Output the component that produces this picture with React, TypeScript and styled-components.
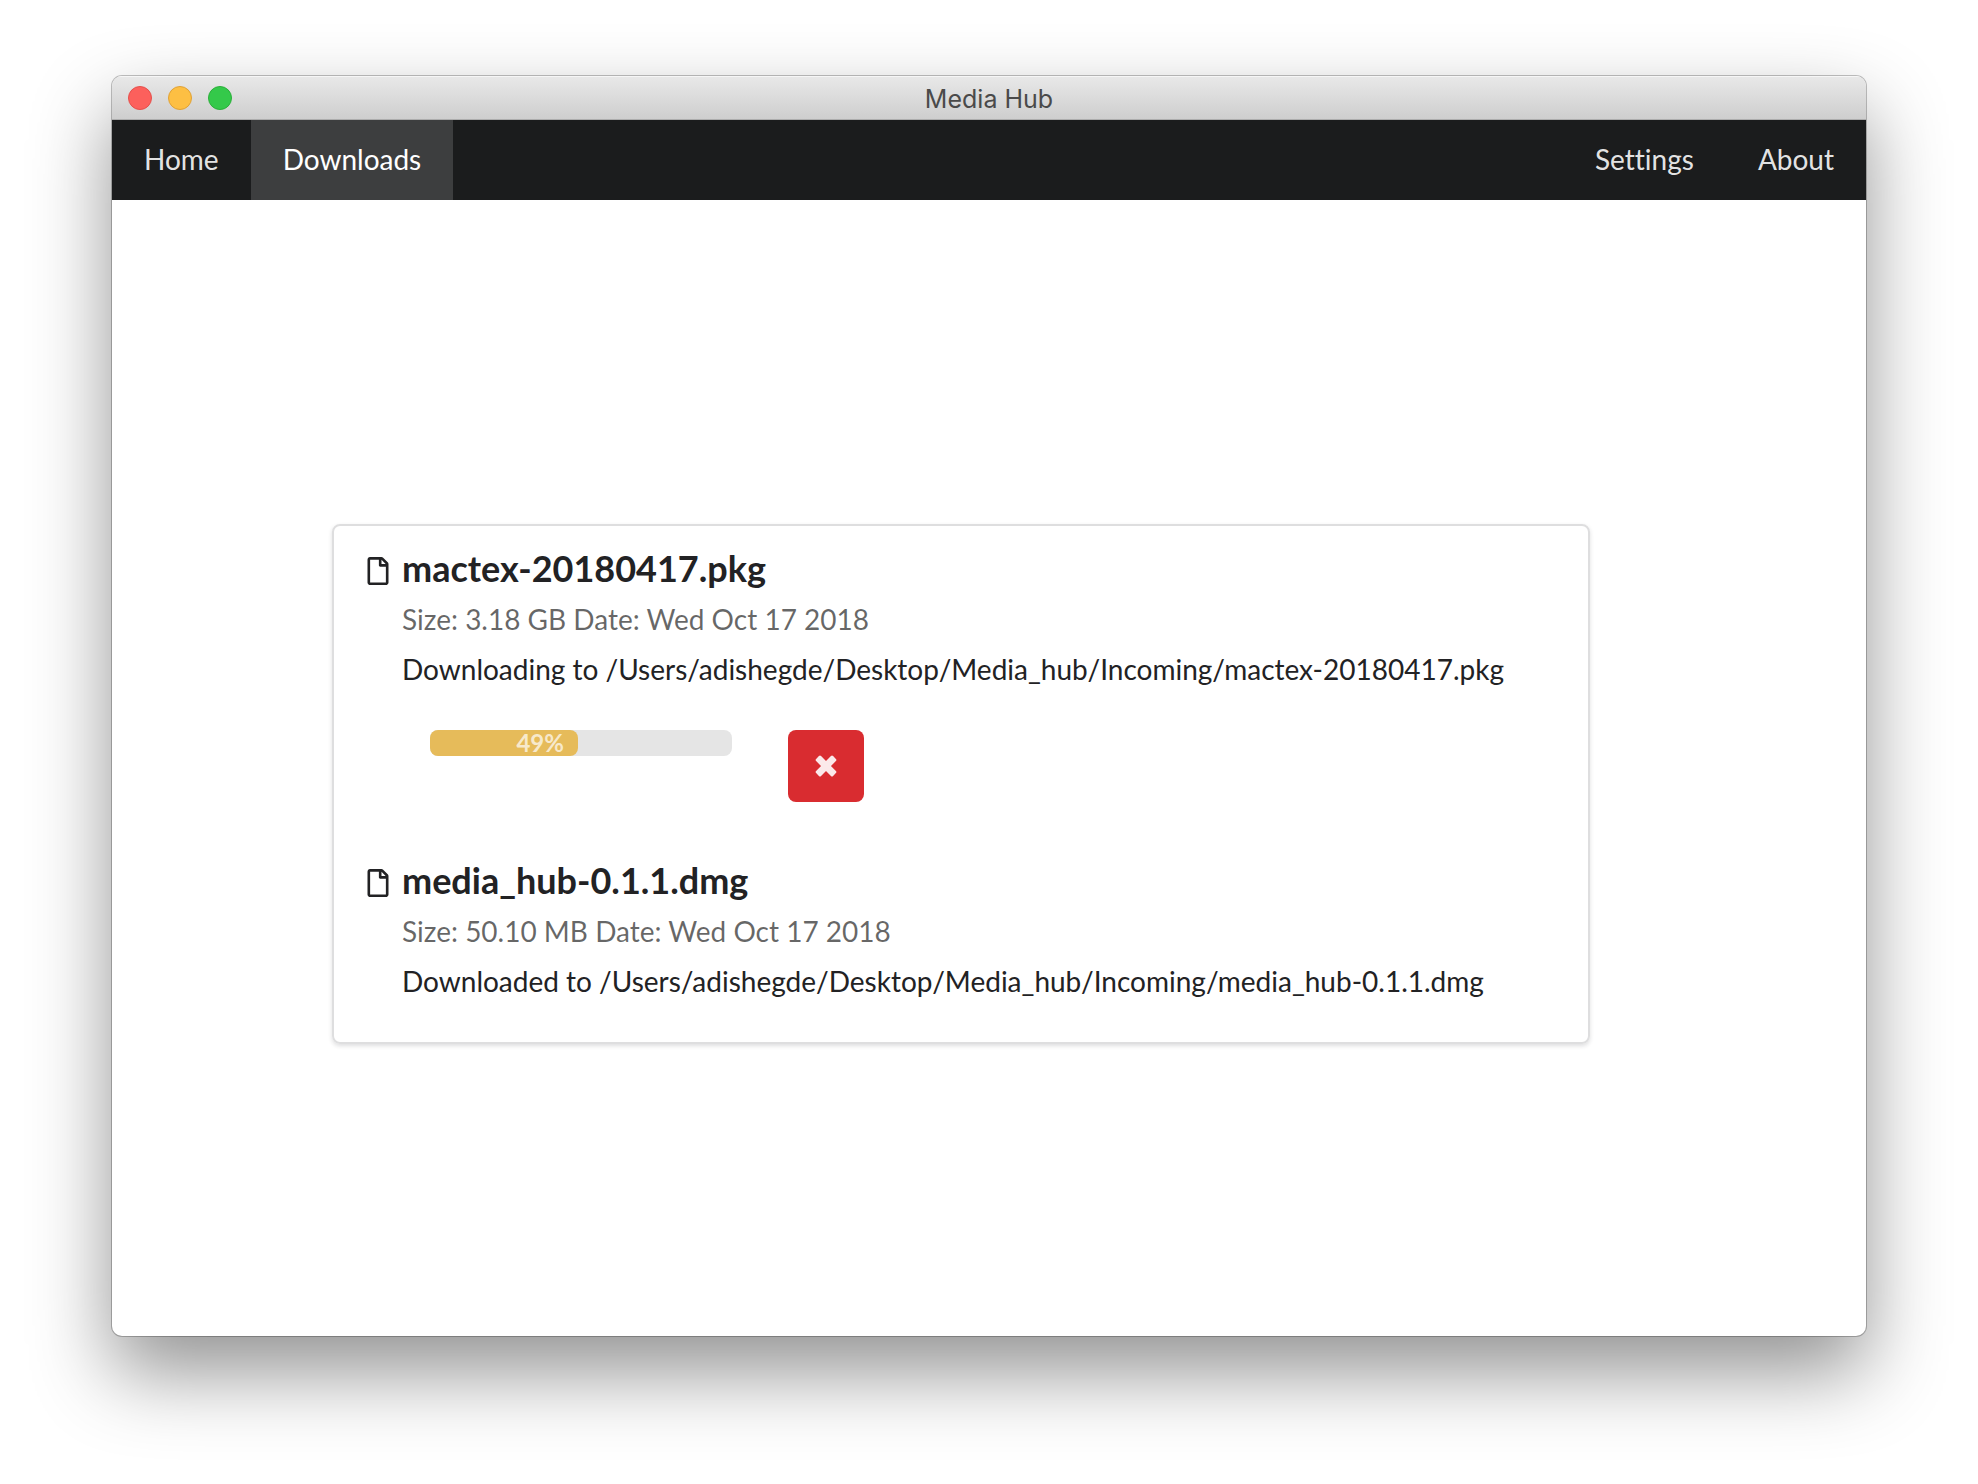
import React from "react";
import styled, { createGlobalStyle } from "styled-components";
import { FaRegFile } from "react-icons/fa";

const GlobalStyle = createGlobalStyle`
  *, *::before, *::after { box-sizing: border-box; }
  html, body { margin: 0; background: #fff; }
  body {
    font-family: Lato, "Open Sans", sans-serif;
    font-size: 28px;
    font-variant-ligatures: none;
    text-rendering: optimizeLegibility;
    color: #222224;
  }
`;

const Desktop = styled.div`
  display: flex;
  min-height: 100vh;
  padding: 76px 112px 148px;
`;

const Window = styled.div`
  flex: 1;
  display: flex;
  flex-direction: column;
  overflow: hidden;
  border-radius: 10px;
  background: #fff;
  box-shadow: 0 0 0 1px rgba(0, 0, 0, 0.24), 0 36px 80px rgba(0, 0, 0, 0.43);
`;

const TitleBar = styled.header`
  display: grid;
  grid-template-columns: 1fr auto 1fr;
  align-items: center;
  height: 44px;
  padding: 0 16px;
  background: linear-gradient(#e8e8e8, #cecece);
  border-top: 1px solid #f6f6f6;
  border-bottom: 1px solid #acacac;
`;

const Lights = styled.div`
  display: flex;
  gap: 16px;
`;

const Light = styled.button<{ $fill: string; $edge: string }>`
  width: 24px;
  height: 24px;
  padding: 0;
  border: 1px solid ${(p) => p.$edge};
  border-radius: 50%;
  background: ${(p) => p.$fill};
`;

const Title = styled.h1`
  margin: 0;
  padding-top: 2px;
  font: 400 25px/32px Inter, Roboto, sans-serif;
  color: #4a4a4a;
`;

const Nav = styled.nav`
  display: flex;
  justify-content: space-between;
  background: #1b1c1d;
`;

const NavGroup = styled.div`
  display: flex;
`;

const NavLink = styled.a<{ $active?: boolean }>`
  padding: 23px 32px 25px;
  line-height: 32px;
  text-decoration: none;
  color: ${(p) => (p.$active ? "#fff" : "rgba(255, 255, 255, 0.9)")};
  background: ${(p) => (p.$active ? "#3d3e3f" : "transparent")};
`;

const Main = styled.main`
  flex: 1;
  display: flex;
  flex-direction: column;
  justify-content: center;
  padding: 32px 276px 0 220px;
`;

const Card = styled.section`
  display: flex;
  flex-direction: column;
  gap: 48px;
  padding: 18px 28px 36px;
  border: 2px solid #dededf;
  border-radius: 8px;
  box-shadow: 0 2px 4px rgba(34, 36, 38, 0.15);
`;

const Item = styled.article`
  display: grid;
  grid-template-columns: 32px 1fr;
  column-gap: 8px;
`;

const FileIcon = styled(FaRegFile)`
  width: 28px;
  height: 28px;
  margin-top: 13px;
  justify-self: center;
`;

const FileName = styled.h2`
  margin: 0 0 2px;
  font-size: 36px;
  line-height: 48px;
  font-weight: 700;
`;

const Meta = styled.p`
  margin: 0;
  line-height: 50px;
  color: rgba(0, 0, 0, 0.6);
`;

const Path = styled.p`
  margin: 0;
  line-height: 50px;
`;

const Controls = styled.div`
  display: flex;
  align-items: flex-start;
  gap: 56px;
  padding: 36px 28px 6px;
`;

const Track = styled.div`
  width: 302px;
  border-radius: 8px;
  background: #e5e5e5;
`;

const Bar = styled.div`
  padding-right: 14px;
  border-radius: 8px;
  background: #e6bb5a;
  color: rgba(255, 255, 255, 0.7);
  font-size: 24px;
  line-height: 26px;
  font-weight: 700;
  text-align: right;
`;

const CancelButton = styled.button`
  display: flex;
  align-items: center;
  justify-content: center;
  width: 76px;
  height: 72px;
  padding: 0;
  border: 0;
  border-radius: 8px;
  background: #d92c30;
`;

type Download = {
  name: string;
  size: string;
  date: string;
  status: string;
  folder: string;
  progress?: number;
};

const downloads: Download[] = [
  {
    name: "mactex-20180417.pkg",
    size: "3.18 GB",
    date: "Wed Oct 17 2018",
    status: "Downloading",
    folder: "/Users/adishegde/Desktop/Media_hub/Incoming/",
    progress: 49,
  },
  {
    name: "media_hub-0.1.1.dmg",
    size: "50.10 MB",
    date: "Wed Oct 17 2018",
    status: "Downloaded",
    folder: "/Users/adishegde/Desktop/Media_hub/Incoming/",
  },
];

function CrossIcon() {
  return (
    <svg width="22" height="22" viewBox="0 0 22 22" fill="#fbe9ea" aria-hidden="true">
      <g transform="rotate(45 11 11)">
        <rect x="-1" y="7.5" width="24" height="7" rx="1.5" />
        <rect x="7.5" y="-1" width="7" height="24" rx="1.5" />
      </g>
    </svg>
  );
}

function DownloadItem({ item }: { item: Download }) {
  return (
    <Item>
      <FileIcon aria-hidden="true" />
      <div>
        <FileName>{item.name}</FileName>
        <Meta>{`Size: ${item.size} Date: ${item.date}`}</Meta>
        <Path>{`${item.status} to ${item.folder}${item.name}`}</Path>
        {item.progress !== undefined && (
          <Controls>
            <Track
              role="progressbar"
              aria-label={item.name}
              aria-valuemin={0}
              aria-valuemax={100}
              aria-valuenow={item.progress}
            >
              <Bar style={{ width: `${item.progress}%` }}>{item.progress}%</Bar>
            </Track>
            <CancelButton type="button" aria-label="Cancel download">
              <CrossIcon />
            </CancelButton>
          </Controls>
        )}
      </div>
    </Item>
  );
}

export default function App() {
  return (
    <>
      <GlobalStyle />
      <Desktop>
        <Window>
          <TitleBar>
            <Lights>
              <Light type="button" aria-label="Close" $fill="#fc605c" $edge="#e4504c" />
              <Light type="button" aria-label="Minimize" $fill="#fdbf43" $edge="#dfa137" />
              <Light type="button" aria-label="Zoom" $fill="#34c94a" $edge="#2baf3a" />
            </Lights>
            <Title>Media Hub</Title>
          </TitleBar>
          <Nav>
            <NavGroup>
              <NavLink href="#home">Home</NavLink>
              <NavLink href="#downloads" $active aria-current="page">Downloads</NavLink>
            </NavGroup>
            <NavGroup>
              <NavLink href="#settings">Settings</NavLink>
              <NavLink href="#about">About</NavLink>
            </NavGroup>
          </Nav>
          <Main>
            <Card>
              {downloads.map((item) => (
                <DownloadItem key={item.name} item={item} />
              ))}
            </Card>
          </Main>
        </Window>
      </Desktop>
    </>
  );
}
